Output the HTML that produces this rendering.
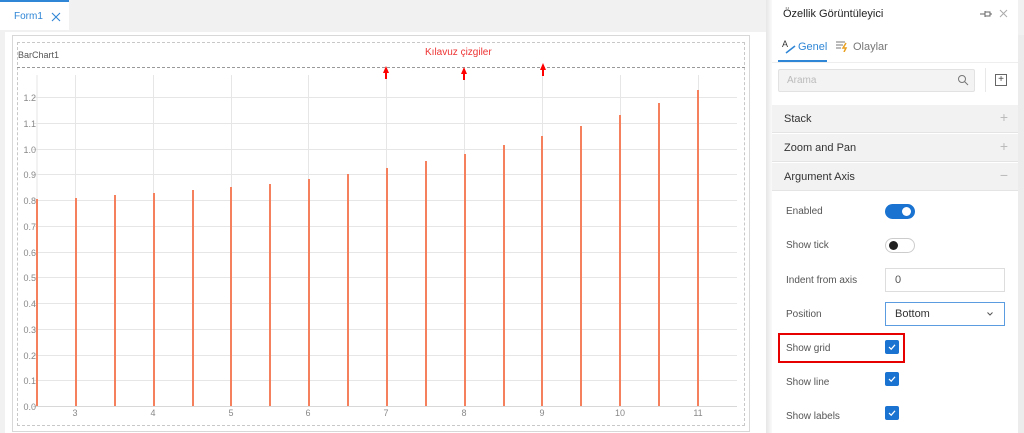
<!DOCTYPE html>
<html><head><meta charset="utf-8"><style>
*{box-sizing:border-box;margin:0;padding:0}
body{width:1024px;height:433px;overflow:hidden;background:#f1f1f1;font-family:"Liberation Sans","DejaVu Sans",sans-serif;position:relative}
.abs{position:absolute}
.lbl{position:absolute;left:786px;font-size:10px;color:#555}
.sec{position:absolute;left:772px;width:246px;height:28px;background:#f2f2f2;border-bottom:1px solid #e4e4e4;font-size:11px;color:#333;padding:8px 0 0 12px}
.sec span{position:absolute;right:10px;top:4px;color:#bbb;font-size:14px}
.cb{position:absolute;left:885px;width:14px;height:14px;background:#1a73d0;border-radius:2px}
.cb svg{position:absolute;left:3px;top:3px}
</style></head><body>
<div class="abs" style="left:0;top:0;width:69px;height:30px;background:#fff;border-top:2px solid #2f86d6"></div>
<div class="abs" style="left:14px;top:11px;font-size:10px;color:#2f86d6">Form1</div>
<svg class="abs" style="left:51px;top:12px" width="10" height="10"><path d="M1 1L9 9M9 1L1 9" stroke="#2f86d6" stroke-width="1.1"/></svg>
<div class="abs" style="left:5px;top:32px;width:761px;height:401px;background:#fff"></div>
<div class="abs" style="left:12px;top:35px;width:738px;height:397px;border:1px solid #d8d8d8"></div>
<div class="abs" style="left:17px;top:42px;width:728px;height:384px;border:1px dashed #c8c8c8"></div>
<div class="abs" style="left:17px;top:67px;width:728px;border-top:1px dashed #999"></div>
<div class="abs" style="left:18px;top:50px;font-size:9px;color:#555">BarChart1</div>
<div class="abs" style="left:425px;top:47px;font-size:10px;color:#e33">Kılavuz çizgiler</div>
<svg class="abs" style="left:0;top:0" width="770" height="433">
<g stroke="#e6e6e6" stroke-width="1">
<line x1="37" y1="75" x2="37" y2="406"/>
<line x1="75.5" y1="75" x2="75.5" y2="406"/><line x1="153.5" y1="75" x2="153.5" y2="406"/><line x1="231.5" y1="75" x2="231.5" y2="406"/><line x1="308.5" y1="75" x2="308.5" y2="406"/><line x1="386.5" y1="75" x2="386.5" y2="406"/><line x1="464.5" y1="75" x2="464.5" y2="406"/><line x1="542.5" y1="75" x2="542.5" y2="406"/><line x1="620.5" y1="75" x2="620.5" y2="406"/><line x1="698.5" y1="75" x2="698.5" y2="406"/>
<line x1="33" y1="97.5" x2="737" y2="97.5"/><line x1="33" y1="123.5" x2="737" y2="123.5"/><line x1="33" y1="149.5" x2="737" y2="149.5"/><line x1="33" y1="174.5" x2="737" y2="174.5"/><line x1="33" y1="200.5" x2="737" y2="200.5"/><line x1="33" y1="226.5" x2="737" y2="226.5"/><line x1="33" y1="252.5" x2="737" y2="252.5"/><line x1="33" y1="277.5" x2="737" y2="277.5"/><line x1="33" y1="303.5" x2="737" y2="303.5"/><line x1="33" y1="329.5" x2="737" y2="329.5"/><line x1="33" y1="355.5" x2="737" y2="355.5"/><line x1="33" y1="380.5" x2="737" y2="380.5"/>
<line x1="33" y1="406.5" x2="737" y2="406.5" stroke="#d8d8d8"/>
</g>
<g fill="#f4805e">
<rect x="36" y="199" width="2" height="207"/><rect x="75" y="198" width="2" height="208"/><rect x="114" y="195" width="2" height="211"/><rect x="153" y="193" width="2" height="213"/><rect x="192" y="190" width="2" height="216"/><rect x="230" y="187" width="2" height="219"/><rect x="269" y="184" width="2" height="222"/><rect x="308" y="179" width="2" height="227"/><rect x="347" y="174" width="2" height="232"/><rect x="386" y="168" width="2" height="238"/><rect x="425" y="161" width="2" height="245"/><rect x="464" y="154" width="2" height="252"/><rect x="503" y="145" width="2" height="261"/><rect x="541" y="136" width="2" height="270"/><rect x="580" y="126" width="2" height="280"/><rect x="619" y="115" width="2" height="291"/><rect x="658" y="103" width="2" height="303"/><rect x="697" y="90" width="2" height="316"/>
</g>
<g font-size="9" fill="#888" text-anchor="end" font-family="Liberation Sans">
<text x="36" y="101">1.2</text><text x="36" y="127">1.1</text><text x="36" y="153">1.0</text><text x="36" y="178">0.9</text><text x="36" y="204">0.8</text><text x="36" y="230">0.7</text><text x="36" y="256">0.6</text><text x="36" y="281">0.5</text><text x="36" y="307">0.4</text><text x="36" y="333">0.3</text><text x="36" y="359">0.2</text><text x="36" y="384">0.1</text><text x="36" y="410">0.0</text>
</g>
<g font-size="9" fill="#888" text-anchor="middle" font-family="Liberation Sans">
<text x="75" y="416">3</text><text x="153" y="416">4</text><text x="231" y="416">5</text><text x="308" y="416">6</text><text x="386" y="416">7</text><text x="464" y="416">8</text><text x="542" y="416">9</text><text x="620" y="416">10</text><text x="698" y="416">11</text>
</g>
<g fill="#f00"><path d="M386 66 L383 73 L385 73 L385 79 L387 79 L387 73 L389 73Z"/><path d="M464 67 L461 74 L463 74 L463 80 L465 80 L465 74 L467 74Z"/><path d="M543 63 L540 70 L542 70 L542 76 L544 76 L544 70 L546 70Z"/></g>
</svg>
<div class="abs" style="left:766px;top:0;width:6px;height:433px;background:linear-gradient(to right,#e6e6e6,#fafafa)"></div>
<div class="abs" style="left:772px;top:0;width:246px;height:433px;background:#fff"></div>
<div class="abs" style="left:1018px;top:35px;width:6px;height:398px;background:#ececec"></div>
<div class="abs" style="left:783px;top:8px;font-size:11px;color:#222">Özellik Görüntüleyici</div>
<svg class="abs" style="left:979px;top:9px" width="14" height="10"><path d="M1 5H6M6 2V8M6 3H11V7H6M11 5H13" stroke="#666" fill="none" stroke-width="1"/></svg>
<svg class="abs" style="left:999px;top:9px" width="9" height="9"><path d="M1 1L8 8M8 1L1 8" stroke="#aaa" stroke-width="1"/></svg>
<div class="abs" style="left:782px;top:39px;font-size:9px;color:#333">A</div>
<svg class="abs" style="left:785px;top:44px" width="12" height="10"><path d="M1 9L10 2" stroke="#2f86d6" stroke-width="1.5"/></svg>
<div class="abs" style="left:798px;top:41px;font-size:11px;color:#2f86d6">Genel</div>
<svg class="abs" style="left:835px;top:40px" width="14" height="12"><path d="M1 2H10M1 5H8M1 8H6" stroke="#777" stroke-width="1"/><path d="M11 3L8 8H11L9 12" stroke="#e9a020" fill="none" stroke-width="1.5"/></svg>
<div class="abs" style="left:853px;top:41px;font-size:11px;color:#777">Olaylar</div>
<div class="abs" style="left:778px;top:60px;width:49px;height:2px;background:#2f86d6"></div>
<div class="abs" style="left:772px;top:62px;width:246px;border-top:1px solid #eee"></div>
<div class="abs" style="left:778px;top:69px;width:197px;height:23px;background:#f3f3f3;border:1px solid #e2e2e2;border-radius:2px;font-size:10px;color:#bbb;padding:5px 8px">Arama</div>
<svg class="abs" style="left:957px;top:74px" width="12" height="12"><circle cx="5" cy="5" r="3.5" stroke="#777" fill="none"/><path d="M7.5 7.5L11 11" stroke="#777"/></svg>
<div class="abs" style="left:985px;top:68px;height:24px;border-left:1px solid #e8e8e8"></div>
<div class="abs" style="left:995px;top:74px;width:12px;height:12px;border:1.5px solid #666;font-size:10px;line-height:9px;text-align:center;color:#444">+</div>
<div class="sec" style="top:105px">Stack<span>+</span></div>
<div class="sec" style="top:134px">Zoom and Pan<span>+</span></div>
<div class="sec" style="top:163px">Argument Axis<span>−</span></div>
<div class="lbl" style="top:206px">Enabled</div>
<div class="abs" style="left:885px;top:204px;width:30px;height:15px;border-radius:8px;background:#1a73d0"><div class="abs" style="left:17px;top:3px;width:9px;height:9px;border-radius:50%;background:#fff"></div></div>
<div class="lbl" style="top:240px">Show tick</div>
<div class="abs" style="left:885px;top:238px;width:30px;height:15px;border-radius:8px;border:1px solid #ccc;background:#fff"><div class="abs" style="left:3px;top:2px;width:9px;height:9px;border-radius:50%;background:#222"></div></div>
<div class="lbl" style="top:275px">Indent from axis</div>
<div class="abs" style="left:885px;top:268px;width:120px;height:24px;border:1px solid #ddd;font-size:11px;color:#555;padding:5px 9px">0</div>
<div class="lbl" style="top:309px">Position</div>
<div class="abs" style="left:885px;top:302px;width:120px;height:24px;border:1px solid #5b9be0;font-size:11px;color:#333;padding:5px 9px">Bottom</div>
<svg class="abs" style="left:987px;top:312px" width="6" height="4"><path d="M0.5 0.5L3 3L5.5 0.5" stroke="#555" fill="none"/></svg>
<div class="lbl" style="top:343px">Show grid</div>
<div class="cb" style="top:340px"><svg width="8" height="8"><path d="M1 4L3.2 6.2L7 1.8" stroke="#fff" fill="none" stroke-width="1.2"/></svg></div>
<div class="abs" style="left:778px;top:333px;width:127px;height:30px;border:2px solid #e60000"></div>
<div class="lbl" style="top:377px">Show line</div>
<div class="cb" style="top:372px"><svg width="8" height="8"><path d="M1 4L3.2 6.2L7 1.8" stroke="#fff" fill="none" stroke-width="1.2"/></svg></div>
<div class="lbl" style="top:411px">Show labels</div>
<div class="cb" style="top:406px"><svg width="8" height="8"><path d="M1 4L3.2 6.2L7 1.8" stroke="#fff" fill="none" stroke-width="1.2"/></svg></div>
</body></html>
